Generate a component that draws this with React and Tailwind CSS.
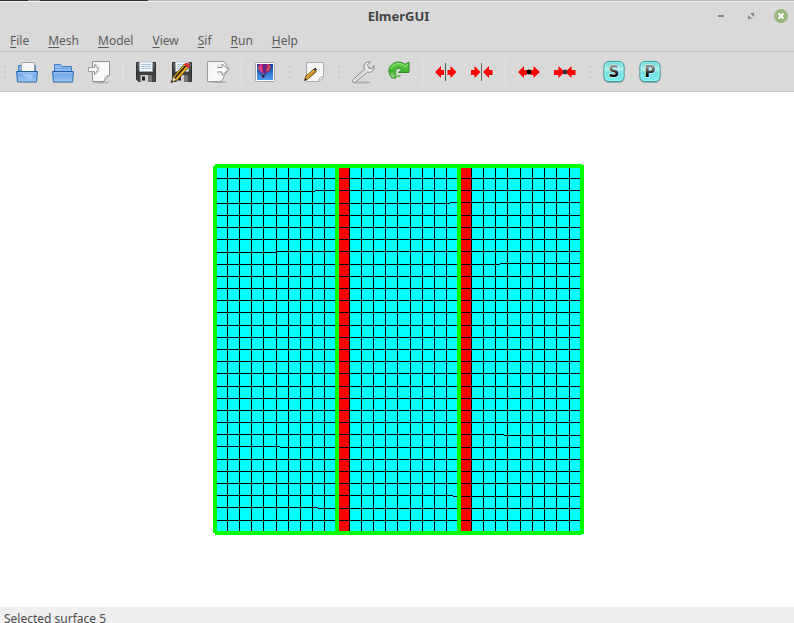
import React from "react";

const menus = ["File", "Mesh", "Model", "View", "Sif", "Run", "Help"];

function Defs() {
  return (
    <svg className="absolute h-0 w-0" aria-hidden="true">
      <defs>
        <linearGradient id="blue" x1="0" y1="0" x2="0" y2="1">
          <stop offset="0" stopColor="#6ca3e3" />
          <stop offset="0.5" stopColor="#7fb2ec" />
          <stop offset="1" stopColor="#a0c9f5" />
        </linearGradient>
        <linearGradient id="paper" x1="0" y1="0" x2="1" y2="1">
          <stop offset="0" stopColor="#f1f1f1" />
          <stop offset="1" stopColor="#ffffff" />
        </linearGradient>
        <linearGradient id="sky" x1="0" y1="0" x2="0" y2="1">
          <stop offset="0" stopColor="#0b3f9c" />
          <stop offset="1" stopColor="#4f9df2" />
        </linearGradient>
        <linearGradient id="green" x1="0" y1="0" x2="0" y2="1">
          <stop offset="0" stopColor="#63cf4b" />
          <stop offset="0.6" stopColor="#43b52f" />
          <stop offset="1" stopColor="#a5dd98" />
        </linearGradient>
        <linearGradient id="aqua" x1="0" y1="0" x2="0" y2="1">
          <stop offset="0" stopColor="#5fd3d3" />
          <stop offset="0.4" stopColor="#b4f1f1" />
          <stop offset="0.55" stopColor="#6fe0e0" />
          <stop offset="1" stopColor="#79efef" />
        </linearGradient>
        <linearGradient id="letter" x1="0" y1="0" x2="0" y2="1">
          <stop offset="0.25" stopColor="#8a8a8a" />
          <stop offset="0.65" stopColor="#000000" />
        </linearGradient>
        <linearGradient id="metal" x1="0" y1="0" x2="0" y2="1">
          <stop offset="0" stopColor="#6b6b6b" />
          <stop offset="0.5" stopColor="#3c3c3c" />
          <stop offset="1" stopColor="#4d4d4d" />
        </linearGradient>
      </defs>
    </svg>
  );
}

const Tray = () => (
  <>
    <path d="M1.500 11.500h21l-1 10.500h-19z" fill="url(#blue)" stroke="#2f6db5" />
    <path d="M2 11.500h20" stroke="#1f5fa9" />
    <path d="M3 12.800h18" stroke="#a8cdf5" />
    <path d="M2.500 22.500h19" stroke="#8f979f" opacity=".6" />
  </>
);

const OpenIcon = () => (
  <>
    <path d="M3.500 12V5.500h17V12z" fill="#7fb0ea" stroke="#4580c4" />
    <path d="M6.500 12V4q0-1.500 1.500-1.500h10q1.500 0 1.500 1.500v8z" fill="#f7f7f7" stroke="#a2a2a2" />
    <Tray />
    <path d="M7 14l6 5h4l1-5z" fill="#c3dffb" opacity=".5" />
  </>
);

const FolderIcon = () => (
  <>
    <path d="M3.500 12V4.500h6l1 2h10V12z" fill="#8dbaf0" stroke="#3f7cc2" />
    <path d="M4 8.500h16" stroke="#6ca0df" />
    <Tray />
  </>
);

const ImportIcon = () => (
  <>
    <ellipse cx="14" cy="22.500" rx="8" ry="1" fill="#999" opacity=".6" />
    <path d="M5.500 1.500h17v14l-6 6h-11z" fill="url(#paper)" stroke="#919191" />
    <path d="M22 15.500q-4 0-4 2 0 2-1.500 4z" fill="#fff" stroke="#919191" strokeWidth=".8" />
    <path d="M1.500 7.500h6v-3l3.500 5-3.500 5v-3h-6z" fill="#fff" stroke="#999" />
    <path d="M8 4.500q4 1 3.500 5 0 4-4 5" fill="none" stroke="#b5b5b5" />
  </>
);

const SaveIcon = ({ pencil = false }) => (
  <>
    <path d="M2.500 2.500h19v19H4.500l-2-2z" fill="url(#metal)" stroke="#303030" />
    <path d="M5.500 2h13v9.500h-13z" fill="#f2f8fd" stroke="#9fb4c5" strokeWidth=".6" />
    <path d="M7 4.500h10M7 6.500h10M7 8.500h10" stroke="#a9c5da" />
    <path d="M6.500 15h10v7h-10z" fill="#cecece" />
    <path d="M8 16.500h3v4H8z" fill="#242424" />
    <path d="M14 15h4v7h-4z" fill="#777" />
    {pencil && (
      <>
        <path d="M1 22.500l2.500-6 11-12.500 4 3.500-11 12.500z" fill="#eeb022" stroke="#47320d" strokeWidth=".8" />
        <path d="M5 18l11-12.500" stroke="#1c1a10" strokeWidth="1.600" />
        <path d="M14 4.500l1.500-1.500q2-1 3.500 1t0 3l-1 1z" fill="#e42d2d" />
        <path d="M1 22.500l2.300-5.500 3.200 3z" fill="#f1ddb1" stroke="#4a3b1f" strokeWidth=".5" />
        <path d="M1 22.500l1-2.200 1.400 1.200z" fill="#111" />
      </>
    )}
  </>
);

const ExportIcon = () => (
  <>
    <ellipse cx="12" cy="22" rx="9" ry="1" fill="#999" opacity=".6" />
    <path d="M1.500 1.500h16.500l4.500 7.500-4.500 7q-1 5.500-5 5.500H1.500z" fill="url(#paper)" stroke="#9b9b9b" />
    <path d="M11.500 7.500h4.500V4l6.500 5.500-6.500 6V12h-4.500" fill="#fafafa" stroke="#8c8c8c" />
    <path d="M13.500 4.500q-2 1-2 3M11.500 12q0 2 2 3" fill="none" stroke="#cfcfcf" />
  </>
);

const BalloonIcon = () => (
  <>
    <rect x="2.500" y="2.500" width="19" height="19" rx="1" fill="#fff" stroke="#a5a5a5" />
    <rect x="4" y="4" width="16" height="16" fill="url(#sky)" />
    <path d="M4.500 7q0-3 4-3h7q3 1 2.500 4-1 4-6 5.500h-2Q5 11 4.500 7z" fill="#9b1d78" />
    <path d="M6 5l1 6 3 2-1-9z" fill="#d93592" />
    <path d="M10 4l.5 9.500 2-1 .5-8.500z" fill="#5d2785" />
    <path d="M14 4q1.500 4-1 8l3-2q2-3 0-6z" fill="#c03a6c" />
    <path d="M5 7l3 4M17 6l-3 5" stroke="#dd8939" strokeWidth=".9" />
    <path d="M7.500 13l2 3M13 13l-2 3" stroke="#4b2048" strokeWidth=".8" />
    <path d="M9 15h2.500v2.500H9z" fill="#361b3e" />
  </>
);

const EditIcon = () => (
  <>
    <path d="M4.500 2.500h17V17l-4.500 4.500H4.500z" fill="url(#paper)" stroke="#aaa" />
    <path d="M21.500 17q-5-1-4.500 4.500z" fill="#fff" stroke="#aaa" />
    <path d="M2.500 20.500l1.500-4.500 8-7 2.500 2.500-8 7z" fill="#f0b92b" stroke="#66481b" />
    <path d="M5.500 17.500l8-7" stroke="#9a711b" />
    <path d="M11.500 9l2-1.500 1.500 2-1.500 2z" fill="#444" />
    <path d="M2.500 20.500l1-2.300 1.500 1.200z" fill="#222" />
  </>
);

const WrenchIcon = () => (
  <>
    <ellipse cx="11" cy="22.500" rx="9" ry="1" fill="#888" opacity=".5" />
    <path
      d="M1.500 20L13.500 9q-1.500-4 1-6 2-1.800 5-1l-3 2.500 1 3.500 3.500.500 2-3q.5 4-2 6-2 1.500-4.500.500L4.500 22q-1.500 1-2.500 0t-.500-2z"
      fill="#eeeeee"
      stroke="#858585"
    />
    <path d="M4 20L15.500 9.500" stroke="#b5b5b5" />
  </>
);

const RedoIcon = () => (
  <>
    <path
      d="M5 18q-5-6-2-11 3-5 9-5 4 0 6 2.500l4-2.500v10.500H11.500L15 9q-3-2-6 0-3 2-1 6l1 3z"
      fill="url(#green)"
      stroke="#298d1f"
    />
    <path d="M3.500 9Q6 3.500 12 3.500q4 0 6 3l3-2.500" fill="none" stroke="#9aec83" />
    <path d="M13.500 15q-2 2.500-4.500.500-1.500-3 .500-5" fill="none" stroke="#62b851" strokeWidth="1.500" />
  </>
);

const SplitIcon = () => (
  <>
    <path d="M1 12l6-6v4h3v5H7v3zM22.500 12l-6-6v4h-3v5h3v3z" fill="#ff0000" />
    <path d="M11.500 3v18" stroke="#555" />
  </>
);

const JoinIcon = () => (
  <>
    <path d="M10.500 12l-6-6v4H1v5h3.500v3zM13 12l6-6v4h3.500v5H19v3z" fill="#ff0000" />
    <path d="M11.500 3v18" stroke="#666" />
  </>
);

const SplitNodeIcon = () => (
  <>
    <path d="M1 12l6-6v4h3v5H7v3zM23 12l-6.500-6v4h-3v5h3v3z" fill="#ff0000" />
    <circle cx="12" cy="12" r="2.400" />
  </>
);

const JoinNodeIcon = () => (
  <>
    <path d="M11.500 12L5.500 6v4H1v5h4.500v3zM12.500 12l6-6v4h4v5h-4v3z" fill="#ff0000" />
    <circle cx="12" cy="12" r="2.400" fill="#333" />
  </>
);

const LetterIcon = ({ letter }) => (
  <>
    <rect x="1.500" y="2" width="21" height="21" rx="5" fill="#8e9999" opacity=".7" />
    <rect x="2" y="1.500" width="20" height="20" rx="5" fill="url(#aqua)" stroke="#2a9c9f" />
    <rect x="3" y="2.500" width="18" height="18" rx="4" fill="none" stroke="#b5f3f3" strokeWidth=".7" />
    <text
      x="12"
      y="17"
      textAnchor="middle"
      fill="url(#letter)"
      stroke="#eafafa"
      strokeWidth="1"
      paintOrder="stroke"
      className="font-['DejaVu_Sans',sans-serif] text-[15px] font-bold"
    >
      {letter}
    </text>
  </>
);

function Tool({ label, children }) {
  return (
    <button type="button" aria-label={label} className="flex h-9 w-9 shrink-0 items-center justify-center">
      <svg viewBox="0 0 24 24" className="h-6 w-6" aria-hidden="true">
        {children}
      </svg>
    </button>
  );
}

function Separator() {
  return (
    <div className="flex w-[11px] shrink-0 justify-center">
      <div className="h-6 w-px bg-[#e5e5e5]" />
    </div>
  );
}

function Handle({ first = false }) {
  return (
    <div className={`flex shrink-0 flex-col items-center gap-[3px] ${first ? "w-[9px]" : "w-[13px]"}`}>
      <span className="h-0.5 w-0.5 bg-[#cccccc]" />
      <span className="h-0.5 w-0.5 bg-[#cccccc]" />
      <span className="h-0.5 w-0.5 bg-[#cccccc]" />
    </div>
  );
}

const columns = [
  227, 239, 251, 263, 276, 288, 300, 312, 324, 349, 361, 373, 385, 397, 410, 422, 434, 446, 471, 483, 495, 507, 520,
  532, 544, 556, 569,
];

// Each row is [y] or [y, x of the step, y after it].
const rows = [
  [178], [191, 315, 190], [203, 450, 202], [215], [227], [239], [252, 276, 251], [264, 500, 263], [276], [288],
  [300], [312], [325], [337], [349], [361], [373], [386], [398], [410], [422], [434, 504, 435], [446, 280, 447],
  [459], [471], [483], [495, 453, 496], [507, 318, 508], [520],
];

function Mesh() {
  return (
    <svg
      width="374"
      height="371"
      viewBox="210 164 374 371"
      shapeRendering="crispEdges"
      role="img"
      aria-label="Surface mesh"
      className="shrink-0"
    >
      <rect x="215" y="166" width="367" height="367" fill="#00ffff" />
      <rect x="339" y="168" width="10" height="363" fill="#ff0000" />
      <rect x="461" y="168" width="10" height="363" fill="#ff0000" />
      {columns.map((x) => (
        <rect key={x} x={x} y="168" width="1" height="363" />
      ))}
      {rows.map(([y, step = 580, next]) => (
        <g key={y}>
          <rect x="217" y={y} width={step - 217} height="1" />
          {next && <rect x={step} y={next} width={580 - step} height="1" />}
        </g>
      ))}
      <g fill="#00ff00">
        <rect x="335" y="166" width="4" height="367" />
        <rect x="457" y="166" width="4" height="367" />
        <rect x="213" y="166" width="4" height="367" />
        <rect x="580" y="165" width="4" height="369" />
        <rect x="215" y="164" width="367" height="4" />
        <rect x="215" y="531" width="367" height="4" />
      </g>
    </svg>
  );
}

export default function App() {
  return (
    <div className="flex h-screen flex-col overflow-hidden bg-white font-['Noto_Sans',sans-serif] text-[12px] text-[#5c5c5c]">
      <Defs />
      <div className="flex h-px shrink-0 bg-[#b4b4b4]">
        <div className="w-7 bg-[#2d2b2f]" />
        <div className="w-3 bg-[#858585]" />
        <div className="w-[108px] bg-[#2d2b2f]" />
      </div>
      <header className="shrink-0 border-t border-[#f0f0f0] bg-[#d9d9d9]">
        <div className="grid h-7 grid-cols-[1fr_auto_1fr] items-center">
          <span />
          <h1 className="pt-0.5 pl-[3px] text-[13px] font-bold text-[#444444]">ElmerGUI</h1>
          <div className="flex items-center justify-end gap-4 pr-[6px]">
            <button type="button" aria-label="Minimize" className="h-[14px] w-[14px]">
              <svg viewBox="0 0 14 14"><path d="M4 7h6" stroke="#858585" strokeWidth="2" /></svg>
            </button>
            <button type="button" aria-label="Restore" className="h-[14px] w-[14px]">
              <svg viewBox="0 0 14 14">
                <path d="M6 4h4v4zM4 6v4h4z" fill="#858585" />
              </svg>
            </button>
            <button type="button" aria-label="Close" className="h-[14px] w-[14px]">
              <svg viewBox="0 0 14 14">
                <circle cx="7" cy="7" r="7" fill="#9ab87c" />
                <path d="M4.500 4.500l5 5M9.500 4.500l-5 5" stroke="#fff" strokeWidth="2" />
              </svg>
            </button>
          </div>
        </div>
        <nav className="flex h-[22px] items-center gap-[19px] border-b border-[#bfbfbf] pl-[10px]">
          {menus.map((menu) => (
            <button key={menu} type="button" className="leading-4">
              <span className="underline underline-offset-2">{menu[0]}</span>
              {menu.slice(1)}
            </button>
          ))}
        </nav>
        <div role="toolbar" aria-label="Main tools" className="flex h-10 items-center border-b border-[#bfbfbf]">
          <Handle first />
          <Tool label="Open"><OpenIcon /></Tool>
          <Tool label="Load mesh"><FolderIcon /></Tool>
          <Tool label="Import"><ImportIcon /></Tool>
          <Separator />
          <Tool label="Save"><SaveIcon /></Tool>
          <Tool label="Save as"><SaveIcon pencil /></Tool>
          <Tool label="Export"><ExportIcon /></Tool>
          <Separator />
          <Tool label="Save picture"><BalloonIcon /></Tool>
          <Handle />
          <Tool label="Edit"><EditIcon /></Tool>
          <Handle />
          <Tool label="Configure"><WrenchIcon /></Tool>
          <Tool label="Remesh"><RedoIcon /></Tool>
          <Separator />
          <Tool label="Divide surface"><SplitIcon /></Tool>
          <Tool label="Unify surface"><JoinIcon /></Tool>
          <Separator />
          <Tool label="Divide edge"><SplitNodeIcon /></Tool>
          <Tool label="Unify edge"><JoinNodeIcon /></Tool>
          <Handle />
          <Tool label="Solver"><LetterIcon letter="S" /></Tool>
          <Tool label="Postprocessor"><LetterIcon letter="P" /></Tool>
        </div>
      </header>
      <main className="flex min-h-0 flex-1 items-center justify-center">
        <Mesh />
      </main>
      <footer className="h-4 shrink-0 bg-[#efefef] pt-1 pl-1 leading-4 text-[#4c4c4c]">Selected surface 5</footer>
    </div>
  );
}
